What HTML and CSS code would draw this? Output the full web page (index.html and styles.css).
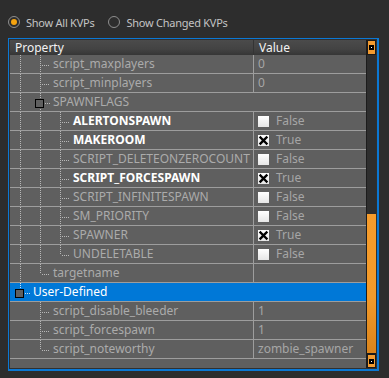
FILE: index.html
```html
<!DOCTYPE html>
<html lang="en">
<head>
  <meta charset="UTF-8">
  <title>KVP Properties</title>
  <link rel="stylesheet" href="styles.css">
</head>
<body>
  <div class="modes">
    <label class="mode"><span class="radio on"><span class="dot"></span></span>Show All KVPs</label>
    <label class="mode"><span class="radio"></span>Show Changed KVPs</label>
  </div>

  <div class="grid">
    <div class="table">
      <div class="head">
        <div class="c1">Property</div>
        <div class="c2">Value</div>
      </div>

      <div class="row"><div class="name"><span class="ind v"></span><span class="ind t"></span><span class="txt">script_maxplayers</span></div><div class="val">0</div></div>
      <div class="row"><div class="name"><span class="ind v"></span><span class="ind t"></span><span class="txt">script_minplayers</span></div><div class="val">0</div></div>
      <div class="row cat"><div class="name"><span class="ind v"></span><span class="ind tb"><span class="box"></span></span><span class="txt">SPAWNFLAGS</span></div></div>

      <div class="row"><div class="name"><span class="ind v"></span><span class="ind v"></span><span class="ind t"></span><span class="txt b">ALERTONSPAWN</span></div><div class="val"><span class="chk"></span>False</div></div>
      <div class="row"><div class="name"><span class="ind v"></span><span class="ind v"></span><span class="ind t"></span><span class="txt b">MAKEROOM</span></div><div class="val"><span class="chk"><svg viewBox="0 0 11 11"><path d="M2.5 2.5L8.5 8.5M8.5 2.5L2.5 8.5"/></svg></span>True</div></div>
      <div class="row"><div class="name"><span class="ind v"></span><span class="ind v"></span><span class="ind t"></span><span class="txt">SCRIPT_DELETEONZEROCOUNT</span></div><div class="val"><span class="chk"></span>False</div></div>
      <div class="row"><div class="name"><span class="ind v"></span><span class="ind v"></span><span class="ind t"></span><span class="txt b">SCRIPT_FORCESPAWN</span></div><div class="val"><span class="chk"><svg viewBox="0 0 11 11"><path d="M2.5 2.5L8.5 8.5M8.5 2.5L2.5 8.5"/></svg></span>True</div></div>
      <div class="row"><div class="name"><span class="ind v"></span><span class="ind v"></span><span class="ind t"></span><span class="txt">SCRIPT_INFINITESPAWN</span></div><div class="val"><span class="chk"></span>False</div></div>
      <div class="row"><div class="name"><span class="ind v"></span><span class="ind v"></span><span class="ind t"></span><span class="txt">SM_PRIORITY</span></div><div class="val"><span class="chk"></span>False</div></div>
      <div class="row"><div class="name"><span class="ind v"></span><span class="ind v"></span><span class="ind t"></span><span class="txt">SPAWNER</span></div><div class="val"><span class="chk"><svg viewBox="0 0 11 11"><path d="M2.5 2.5L8.5 8.5M8.5 2.5L2.5 8.5"/></svg></span>True</div></div>
      <div class="row"><div class="name"><span class="ind v"></span><span class="ind v"></span><span class="ind l"></span><span class="txt">UNDELETABLE</span></div><div class="val"><span class="chk"></span>False</div></div>
      <div class="row"><div class="name"><span class="ind v"></span><span class="ind l"></span><span class="txt">targetname</span></div><div class="val"></div></div>

      <div class="row cat sel"><div class="name"><span class="ind lb"><span class="box"></span></span><span class="txt">User-Defined</span></div></div>

      <div class="row"><div class="name"><span class="ind"></span><span class="ind t"></span><span class="txt">script_disable_bleeder</span></div><div class="val">1</div></div>
      <div class="row"><div class="name"><span class="ind"></span><span class="ind t"></span><span class="txt">script_forcespawn</span></div><div class="val">1</div></div>
      <div class="row"><div class="name"><span class="ind"></span><span class="ind l"></span><span class="txt">script_noteworthy</span></div><div class="val">zombie_spawner</div></div>
    </div>

    <div class="sb">
      <div class="sb-btn"><i></i></div>
      <div class="sb-track"><div class="sb-thumb"></div></div>
      <div class="sb-btn"><i></i></div>
    </div>
  </div>
</body>
</html>
```

FILE: styles.css
```css
* {
  box-sizing: border-box;
}
body {
  margin: 0;
  background: #2d2d2d;
  font-family: "Noto Sans", "Open Sans", sans-serif;
  font-size: 12px;
}
.modes {
  display: flex;
  align-items: center;
  height: 14px;
  padding-left: 8px;
  margin: 15px 0 9px 0;
  gap: 14px;
}
.mode {
  display: flex;
  align-items: center;
  gap: 6px;
  color: #c4c4c4;
  font-size: 11px;
  letter-spacing: -0.25px;
}
.radio {
  width: 12px;
  height: 12px;
  border-radius: 50%;
  border: 1px solid #8e8e8e;
  display: flex;
  align-items: center;
  justify-content: center;
}
.radio .dot {
  width: 6px;
  height: 6px;
  border-radius: 50%;
  background: #f5a30f;
}

/* property grid */
.grid {
  margin-left: 8px;
  width: 371px;
  height: 333px;
  border: 1px solid #0b78d4;
  border-width: 1px 2px 2px 1px;
  padding: 1px;
  background: #303030;
  display: flex;
}
.table {
  width: 356px;
  background: #5f5f5f;
  overflow: hidden;
  display: flex;
  flex-direction: column;
}
.head {
  height: 15px;
  flex: none;
  display: flex;
  line-height: 15px;
  color: #f2f2f2;
  background: linear-gradient(#4b4b4b, #434343 60%, #363636);
}
.head .c1 {
  width: 244px;
  padding-left: 5px;
  border-right: 1px solid #343434;
}
.head .c2 {
  padding-left: 5px;
}
.row {
  height: 19px;
  flex: none;
  display: flex;
  line-height: 18px;
  color: #ababab;
  border-bottom: 1px solid #9d9d9d;
}
.name {
  width: 244px;
  display: flex;
  border-right: 1px solid #9d9d9d;
  white-space: nowrap;
}
.cat .name {
  flex: 1;
  border-right: none;
}
.sel {
  background: #0078d7;
  color: #fff;
}
.val {
  flex: 1;
  padding-left: 4px;
  display: flex;
  align-items: center;
  gap: 7px;
  color: #a6a6a6;
}
.txt {
  padding-left: 3px;
}
.txt.b {
  color: #fff;
  font-weight: bold;
}

/* tree guides */
.ind {
  width: 20px;
  flex: none;
}
.v {
  background: repeating-linear-gradient(#b8b8b8 0 1px, transparent 1px 2px) 10px 0 / 1px 100% no-repeat;
}
.t {
  background:
    repeating-linear-gradient(#b8b8b8 0 1px, transparent 1px 2px) 10px 0 / 1px 100% no-repeat,
    repeating-linear-gradient(90deg, #b8b8b8 0 1px, transparent 1px 2px) 12px 10px / 8px 1px no-repeat;
}
.l {
  background:
    repeating-linear-gradient(#b8b8b8 0 1px, transparent 1px 2px) 10px 0 / 1px 10px no-repeat,
    repeating-linear-gradient(90deg, #b8b8b8 0 1px, transparent 1px 2px) 12px 10px / 8px 1px no-repeat;
}
.tb {
  padding: 6px 0 0 5px;
  background:
    repeating-linear-gradient(#b8b8b8 0 1px, transparent 1px 2px) 10px 0 / 1px 100% no-repeat,
    repeating-linear-gradient(90deg, #b8b8b8 0 1px, transparent 1px 2px) 15px 10px / 5px 1px no-repeat;
}
.lb {
  padding: 6px 0 0 5px;
  background:
    repeating-linear-gradient(#c8dff5 0 1px, transparent 1px 2px) 10px 0 / 1px 6px no-repeat,
    repeating-linear-gradient(90deg, #c8dff5 0 1px, transparent 1px 2px) 15px 10px / 5px 1px no-repeat;
}
.box {
  display: block;
  width: 9px;
  height: 9px;
  border: 1px solid #000;
  background: #5f5f5f;
}
.chk {
  width: 11px;
  height: 11px;
  flex: none;
  background: linear-gradient(#ffffff, #e6e6e6);
}
.chk svg {
  display: block;
  width: 11px;
  height: 11px;
  stroke: #000;
  stroke-width: 2.4;
  stroke-linecap: square;
  fill: none;
}

/* scrollbar */
.sb {
  width: 10px;
  display: flex;
  flex-direction: column;
  background: #2e2e2e;
  border-left: 1px solid #1c1c1c;
}
.sb-btn {
  height: 15px;
  flex: none;
  background: #f29b30;
  border: 1px solid #1a1a1a;
  display: flex;
  align-items: center;
  justify-content: center;
}
.sb-btn:last-child {
  height: 14px;
}
.sb-btn i {
  width: 5px;
  height: 5px;
  border: 2px solid #000;
  background: #fff;
}
.sb-track {
  flex: 1;
  padding-top: 159px;
}
.sb-thumb {
  height: 140px;
  background: linear-gradient(#f69c2c, #f39a29 60%, #da841c);
  border-bottom: 1px solid #1a1a1a;
}
```
